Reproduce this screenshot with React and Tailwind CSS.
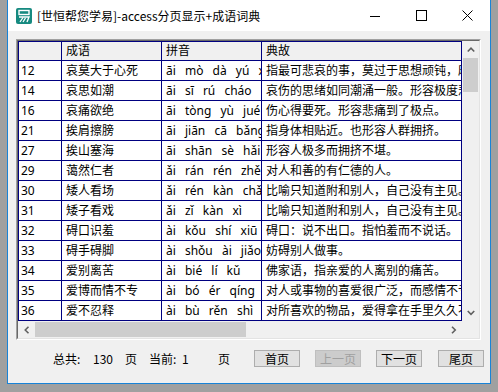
import React from "react";

const rows = [
  ["12", "哀莫大于心死", "āi mò dà yú xīn sǐ", "指最可悲哀的事，莫过于思想顽钝，麻木不仁。"],
  ["14", "哀思如潮", "āi sī rú cháo", "哀伤的思绪如同潮涌一般。形容极度悲伤。"],
  ["16", "哀痛欲绝", "āi tòng yù jué", "伤心得要死。形容悲痛到了极点。"],
  ["21", "挨肩擦膀", "āi jiān cā bǎng", "指身体相贴近。也形容人群拥挤。"],
  ["27", "挨山塞海", "āi shān sè hǎi", "形容人极多而拥挤不堪。"],
  ["29", "蔼然仁者", "ǎi rán rén zhě", "对人和善的有仁德的人。"],
  ["30", "矮人看场", "ǎi rén kàn chǎng", "比喻只知道附和别人，自己没有主见。"],
  ["31", "矮子看戏", "ǎi zǐ kàn xì", "比喻只知道附和别人，自己没有主见。"],
  ["32", "碍口识羞", "ài kǒu shí xiū", "碍口：说不出口。指怕羞而不说话。"],
  ["33", "碍手碍脚", "ài shǒu ài jiǎo", "妨碍别人做事。"],
  ["34", "爱别离苦", "ài bié lí kǔ", "佛家语，指亲爱的人离别的痛苦。"],
  ["35", "爱博而情不专", "ài bó ér qíng bù zhuān", "对人或事物的喜爱很广泛，而感情不专一。"],
  ["36", "爱不忍释", "ài bù rěn shì", "对所喜欢的物品，爱得拿在手里久久不肯放下。"],
];

function Chevron({ dir }) {
  const pts = {
    up: "0.75,4.5 4,1.25 7.25,4.5",
    down: "0.75,1 4,4.25 7.25,1",
    left: "4.5,0.75 1.25,4 4.5,7.25",
    right: "1,0.75 4.25,4 1,7.25",
  }[dir];
  const vertical = dir === "up" || dir === "down";
  return (
    <svg width={vertical ? 8 : 6} height={vertical ? 6 : 8} viewBox={vertical ? "0 0 8 6" : "0 0 6 8"}>
      <polyline points={pts} fill="none" stroke="#606060" strokeWidth="1.6" />
    </svg>
  );
}

function AppIcon() {
  return (
    <svg width="16" height="16" viewBox="0 0 16 16">
      <rect x="0" y="0" width="16" height="16" rx="2" fill="#168a80" />
      <rect x="3" y="2.5" width="10" height="4" fill="none" stroke="#ffffff" strokeWidth="1.4" />
      <path d="M3 9 H13 L11 14" fill="none" stroke="#ffffff" strokeWidth="1.4" />
      <path d="M4 14 L7 9.5 M7 14 L9.5 10" fill="none" stroke="#ffffff" strokeWidth="1.3" />
    </svg>
  );
}

function Btn({ children, disabled }) {
  return (
    <div
      className={
        "w-[46px] h-[17px] flex items-center justify-center border text-[12px] leading-none " +
        (disabled
          ? "bg-[#cccccc] border-[#bfbfbf] text-[#a0a0a0]"
          : "bg-[#e1e1e1] border-[#adadad] text-black")
      }
    >
      {children}
    </div>
  );
}

export default function App() {
  const font = { fontFamily: '"Noto Sans", "Noto Sans CJK SC", sans-serif' };
  return (
    <div className="w-[498px] h-[392px] bg-[#a0a0a0] pl-[7px] overflow-hidden" style={font}>
      <div className="w-[484px] h-[384px] border-x border-b border-[#1883d7] bg-[#f0f0f0] flex flex-col">
        {/* Title bar */}
        <div className="h-[31px] bg-white flex items-center shrink-0">
          <div className="ml-[8px] flex items-center">
            <AppIcon />
          </div>
          <div
            className="ml-[5px] text-[12px] text-black leading-none"
            style={{ fontFamily: '"Noto Sans CJK SC", sans-serif' }}
          >
            [世恒帮您学易]-access分页显示+成语词典
          </div>
          <div className="ml-auto flex h-full">
            <div className="w-[46px] h-full flex items-center justify-center">
              <svg width="10" height="10" viewBox="0 0 10 10">
                <line x1="0" y1="5.5" x2="10" y2="5.5" stroke="#000" strokeWidth="1" />
              </svg>
            </div>
            <div className="w-[46px] h-full flex items-center justify-center">
              <svg width="11" height="11" viewBox="0 0 11 11">
                <rect x="0.5" y="0.5" width="10" height="10" fill="none" stroke="#000" strokeWidth="1" />
              </svg>
            </div>
            <div className="w-[46px] h-full flex items-center justify-center">
              <svg width="11" height="11" viewBox="0 0 11 11">
                <path d="M0.5 0.5 L10.5 10.5 M10.5 0.5 L0.5 10.5" stroke="#000" strokeWidth="1" />
              </svg>
            </div>
          </div>
        </div>

        {/* Grid */}
        <div className="ml-[8px] mt-[8px] w-[465px] h-[301px] border border-[#a0a0a0] border-r-white border-b-white">
          <div className="w-full h-full border border-[#696969] border-r-[#e3e3e3] border-b-[#e3e3e3] flex flex-col">
            <div className="flex">
              <div className="w-[444px] h-[280px] border-l border-t border-[#000080] bg-white flex flex-col text-[12px] text-black">
                <div className="h-[19px] flex border-b border-[#000080] bg-[#f0f0f0]">
                  <div className="w-[43px] border-r border-[#000080]"></div>
                  <div className="w-[100px] border-r border-[#000080] pl-[4px] flex items-center overflow-hidden whitespace-nowrap">成语</div>
                  <div className="w-[100px] border-r border-[#000080] pl-[4px] flex items-center overflow-hidden whitespace-nowrap">拼音</div>
                  <div className="w-[200px] border-r border-[#000080] pl-[4px] flex items-center overflow-hidden whitespace-nowrap">典故</div>
                </div>
                {rows.map((r) => (
                  <div key={r[0]} className="h-[20px] flex border-b border-[#000080]">
                    <div className="w-[43px] border-r border-[#000080] pl-[2px] flex items-center overflow-hidden whitespace-nowrap">{r[0]}</div>
                    <div className="w-[100px] border-r border-[#000080] pl-[4px] flex items-center overflow-hidden whitespace-nowrap">{r[1]}</div>
                    <div className="w-[100px] border-r border-[#000080] pl-[4px] flex items-center overflow-hidden whitespace-nowrap [word-spacing:6px]">{r[2]}</div>
                    <div className="w-[200px] border-r border-[#000080] pl-[4px] flex items-center overflow-hidden whitespace-nowrap">{r[3]}</div>
                  </div>
                ))}
              </div>
              {/* vertical scrollbar */}
              <div className="w-[17px] h-[280px] bg-[#f0f0f0] flex flex-col">
                <div className="h-[17px] flex items-center justify-center"><Chevron dir="up" /></div>
                <div className="h-[34px] mx-[1px] bg-[#cdcdcd]"></div>
                <div className="flex-1"></div>
                <div className="h-[17px] flex items-center justify-center"><Chevron dir="down" /></div>
              </div>
            </div>
            <div className="flex">
              <div className="w-[444px] h-[17px] bg-[#f0f0f0] flex items-center">
                <div className="w-[17px] h-full flex items-center justify-center"><Chevron dir="left" /></div>
                <div className="w-[211px] h-[15px] bg-[#cdcdcd]"></div>
                <div className="flex-1"></div>
                <div className="w-[17px] h-full flex items-center justify-center"><Chevron dir="right" /></div>
              </div>
              <div className="w-[17px] h-[17px] bg-[#f0f0f0]"></div>
            </div>
          </div>
        </div>

        {/* Bottom bar */}
        <div
          className="mt-[10px] h-[17px] flex items-center text-[12px] text-black leading-none"
          style={{ fontFamily: '"Noto Sans CJK SC", sans-serif' }}
        >
          <div className="ml-[45px] w-[40px]">总共:</div>
          <div className="w-[32px]">130</div>
          <div className="w-[24px]">页</div>
          <div className="w-[33px]">当前:</div>
          <div className="w-[36px]">1</div>
          <div className="w-[36px]">页</div>
          <Btn>首页</Btn>
          <div className="w-[15px]"></div>
          <Btn disabled>上一页</Btn>
          <div className="w-[15px]"></div>
          <Btn>下一页</Btn>
          <div className="w-[16px]"></div>
          <Btn>尾页</Btn>
        </div>
      </div>
    </div>
  );
}
